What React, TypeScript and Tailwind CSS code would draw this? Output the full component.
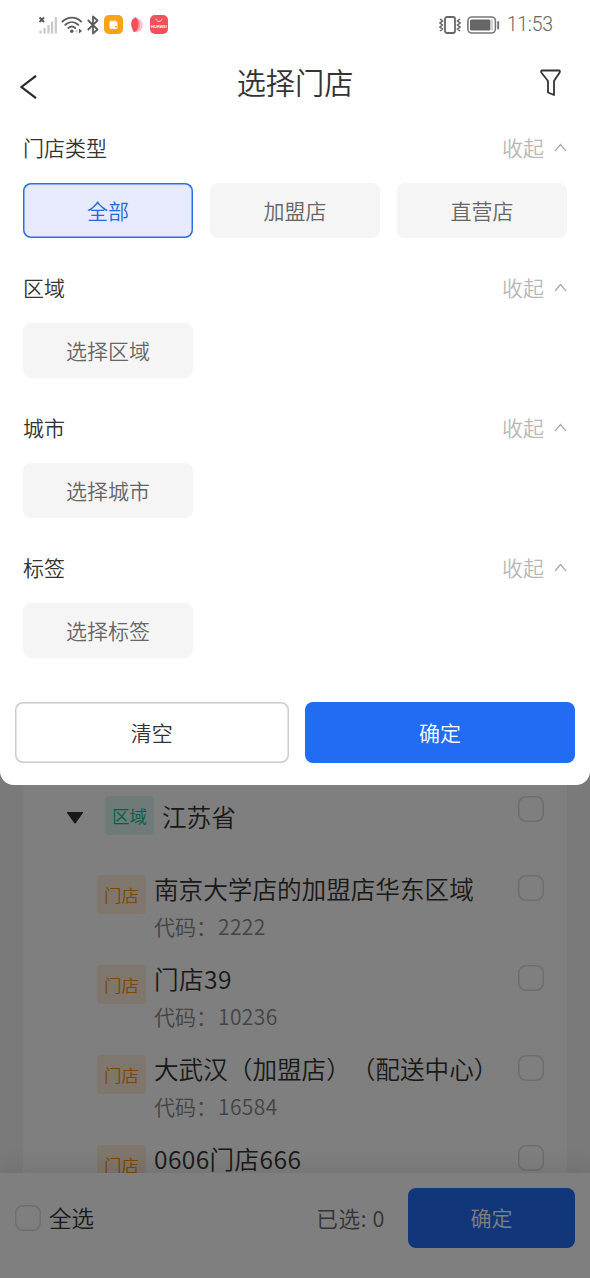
import React, { useState } from 'react';

interface FilterSection {
    title: string;
    options: string[];
}

interface Store {
    name: string;
    code?: string;
}

const sections: FilterSection[] = [
    { title: '门店类型', options: ['全部', '加盟店', '直营店'] },
    { title: '区域', options: ['选择区域'] },
    { title: '城市', options: ['选择城市'] },
    { title: '标签', options: ['选择标签'] },
];

const stores: Store[] = [
    { name: '南京大学店的加盟店华东区域', code: '2222' },
    { name: '门店39', code: '10236' },
    { name: '大武汉（加盟店）（配送中心）', code: '16584' },
    { name: '0606门店666' },
];

const StatusBar: React.FC = () => (
    <div className="h-12 pl-[38px] pr-9 flex items-center justify-between text-[#666]">
        <div className="flex items-center pt-px">
            {/* signal */}
            <svg width="20" height="18" viewBox="0 0 20 18">
                <path d="M1.5 1.5l4.5 4.5M6 1.5L1.5 6" stroke="#555" strokeWidth="1.8" />
                <path d="M2.5 14.5v3M6.5 12v5.5M10.5 9v8.5M14 5.5v12M17.8 1v16.5" stroke="#c9c9c9" strokeWidth="2.2" />
            </svg>
            {/* wifi */}
            <svg className="ml-[3px]" width="22" height="18" viewBox="0 0 22 18" fill="none" stroke="#5c5c5c" strokeWidth="1.9" strokeLinecap="round">
                <path d="M1.5 5.5C7 .3 15 .3 20 5.5M4.3 8.8c4-3.6 9-3.6 13 0M7.3 12c2.2-1.8 5-1.8 7 0" />
                <circle cx="10.8" cy="15.3" r="1.8" fill="#5c5c5c" stroke="none" />
                <path d="M16.5 12.5v5l-2.5-2.500z" fill="#d0d0d0" stroke="none" />
                <path d="M18 12.5v5l3-2.500z" fill="#5c5c5c" stroke="none" />
            </svg>
            {/* bluetooth */}
            <svg className="ml-1" width="12" height="20" viewBox="0 0 12 20" fill="none" stroke="#5c5c5c" strokeWidth="1.8">
                <path d="M.8 5l9.7 9.5L6 18.5V1.5l4.5 4L.8 15" strokeLinejoin="round" />
            </svg>
            <svg className="ml-[5px]" width="19" height="19" viewBox="0 0 19 19">
                <rect width="19" height="19" rx="5" fill="#f9a11b" />
                <rect x="5.5" y="5.5" width="7" height="2.5" rx="1" fill="#ffd98f" />
                <rect x="5.5" y="6.5" width="8" height="7.5" rx="1.8" fill="#fff" />
                <rect x="11" y="11" width="2" height="1.3" fill="#f9a11b" />
            </svg>
            <svg className="ml-2" width="12" height="16" viewBox="0 0 12 16">
                <path d="M5 1l2.500.500 1 1 1.500.500.500 1.500 1 1v6l-1 1-.5 1.500-2 .5-3 1z" fill="#fbc5ca" />
                <path d="M4 1c4 1 5.5 4 5 8-.3 3-2 5-4.500 6z" fill="#f7959d" />
                <path d="M4 .3c3 1.2 3.700 4.700 3.200 8.200-.3 3-1.2 5.300-3.700 6.800C1.500 14 1.500 12 .8 10.500 0 9 0 5 1 3z" fill="#f1505c" />
            </svg>
            <div className="ml-[7px] w-[18px] h-[19px] rounded-[5px] bg-[#f2515a] flex flex-col items-center text-white">
                <svg className="mt-[3px]" width="8" height="5" viewBox="0 0 8 5" fill="none" stroke="#ffd5d5" strokeWidth="1">
                    <path d="M1 .5c.5 4 5.500 4 6 0" />
                </svg>
                <span className="mt-px text-[4px] leading-[5px] font-bold">HUAWEI</span>
            </div>
        </div>
        <div className="flex items-center pt-px">
            {/* vibrate */}
            <svg width="22" height="18" viewBox="0 0 22 18" fill="none" stroke="#666">
                <rect x="6" y="1" width="10" height="16" rx="2" strokeWidth="1.8" />
                <path d="M1 3l2.500 2L1 7l2.500 2L1 11l2.500 2L1 15M21 3l-2.500 2L21 7l-2.500 2 2.500 2-2.500 2 2.500 2" strokeWidth="1.5" />
            </svg>
            {/* battery */}
            <svg className="ml-[6px]" width="33" height="18" viewBox="0 0 33 18">
                <rect x=".9" y="1" width="27.5" height="16" rx="4" fill="none" stroke="#777" strokeWidth="1.6" />
                <rect x="3" y="3.5" width="20.5" height="11" rx="1.5" fill="#666" />
                <rect x="23.5" y="3.5" width="2.5" height="11" fill="#d5d5d5" />
                <rect x="30.2" y="5" width="2" height="8.5" rx="1" fill="#777" />
            </svg>
            <span className="ml-[7px] mr-px pt-px font-[Roboto] font-light text-[19.5px] leading-none -tracking-[0.2px]">11:53</span>
        </div>
    </div>
);

const Checkbox: React.FC = () => (
    <span className="block w-[26px] h-[26px] shrink-0 rounded-[8px] shadow-[inset_0_0_0_1.5px_#dcdcdc]" />
);

const FilterPanel: React.FC = () => {
    const [type, setType] = useState('全部');

    return (
        <div className="relative z-20 h-[785px] shrink-0 bg-white rounded-b-[14px]">
            <StatusBar />
            <header className="h-[70px] pl-5 pr-[29px] flex items-center justify-between">
                <svg className="mt-2" width="17" height="24" viewBox="0 0 17 24" fill="none" stroke="#2b2b2b" strokeWidth="2.2">
                    <path d="M16 .8L1.5 12 16 23.2" />
                </svg>
                <h1 className="flex-1 pl-[13px] pb-[2px] text-center text-[29.2px] leading-none text-[#333] font-[350]">选择门店</h1>
                <svg width="21" height="28" viewBox="0 0 21 28" fill="none" stroke="#333" strokeWidth="1.8" strokeLinejoin="round">
                    <path d="M1.5 1.5h18q.8 1.2 0 2.3l-5.500 8.200v14l-6-2.500V12L1.5 3.800q-.8-1.100 0-2.300z" />
                </svg>
            </header>

            {sections.map((section) => (
                <section key={section.title} className="h-[140px] px-[23px]">
                    <div className="h-[65px] pb-[6px] flex items-center justify-between text-[21px]">
                        <span className="text-[#333]">{section.title}</span>
                        <button className="flex items-center text-[#b8b8b8]">
                            收起
                            <svg className="ml-[10px]" width="13" height="9" viewBox="0 0 13 9" fill="none" stroke="#aaa" strokeWidth="1.2">
                                <path d="M1 8l5.500-6.500L12 8" />
                            </svg>
                        </button>
                    </div>
                    <div className="grid grid-cols-3 gap-[17px]">
                        {section.options.map((option) => (
                            <button
                                key={option}
                                onClick={() => setType(option)}
                                className={
                                    option === type
                                        ? 'h-[54.5px] rounded-[8px] shadow-[inset_0_0_0_1.5px_#2a6fe0] bg-[#e7eafd] text-[21px] text-[#226ae0]'
                                        : 'h-[54.5px] rounded-[8px] bg-[#f5f5f5] text-[21px] text-[#666]'
                                }
                            >
                                {option}
                            </button>
                        ))}
                    </div>
                </section>
            ))}

            <div className="px-[15px] pt-6 flex gap-[16.5px] text-[21px]">
                <button className="w-[273.5px] h-[60.5px] rounded-[8px] shadow-[inset_0_0_0_1.5px_#ccc] text-[#333]">清空</button>
                <button className="w-[270px] h-[60.5px] rounded-[8px] bg-[#226cf3] text-white">确定</button>
            </div>
        </div>
    );
};

const StoreList: React.FC = () => (
    <div className="-mt-4 flex-1 min-h-0 px-[23px] bg-[#f4f4f4] overflow-hidden">
        <div className="h-full pt-[27px] pr-[23px] bg-white">
            <div className="h-[78px] pl-[43px] flex items-start">
                <svg className="mt-4" width="18" height="12" viewBox="0 0 18 12">
                    <path d="M1.5 0h15q1.200 0 .4 1L9.800 11q-.8 1-1.600 0L1.100 1q-.8-1 .4-1z" fill="#333" />
                </svg>
                <span className="ml-[21px] w-[49px] h-[39px] rounded-[4px] bg-[#dcf6f0] text-[#00bd93] text-[17.5px] leading-[40px] text-center">区域</span>
                <span className="ml-2 mt-[2px] flex-1 text-[24.6px] leading-[36px] text-[#333]">江苏省</span>
                <Checkbox />
            </div>
            {stores.map((store) => (
                <div key={store.name} className="h-[90px] pl-[74px] flex items-start">
                    <span className="w-[49px] h-[39px] mt-[0.5px] rounded-[4px] bg-[#ffeddc] text-[#ff8c00] text-[17.5px] leading-[40px] text-center">门店</span>
                    <div className="ml-2 flex-1 whitespace-nowrap [text-spacing-trim:space-all]">
                        <div className={`-mt-1 text-[24.6px] leading-[36px] text-[#333] ${/\d/.test(store.name) ? 'tracking-[0.4px]' : ''}`}>
                            {store.name}
                        </div>
                        {store.code && (
                            <div className="mt-[5px] text-[21px] leading-[30px] text-[#888]">
                                代码：<span className="ml-px tracking-[0.4px]">{store.code}</span>
                            </div>
                        )}
                    </div>
                    <div className="mt-px">
                        <Checkbox />
                    </div>
                </div>
            ))}
        </div>
    </div>
);

export default function App() {
    return (
        <div className="relative w-[590px] h-[1278px] flex flex-col overflow-hidden bg-white font-[350] font-['Noto_Sans_CJK_SC',sans-serif]">
            <FilterPanel />
            <StoreList />

            <footer className="relative h-[105px] shrink-0 px-[15px] pb-[15px] flex items-center bg-white shadow-[0_-4px_24px_rgba(0,30,20,0.12)]">
                <Checkbox />
                <span className="ml-2 text-[22.5px] text-[#333]">全选</span>
                <span className="ml-auto mr-[23px] text-[21.6px] tracking-[0.6px] text-[#666]">已选: 0</span>
                <button className="w-[167px] h-[60px] rounded-[8px] bg-[#226cf3] text-[21px] text-white">确定</button>
            </footer>

            <div className="absolute inset-0 z-10 bg-black/50" />
        </div>
    );
}
